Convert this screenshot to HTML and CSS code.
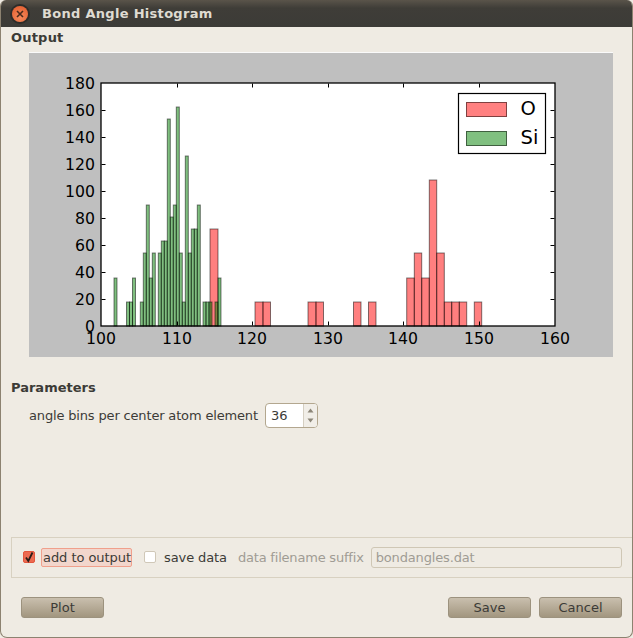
FILE: index.html
```html
<!DOCTYPE html>
<html>
<head>
  <meta charset="UTF-8">
  <title>Bond Angle Histogram</title>
  <link rel="stylesheet" href="styles.css">
</head>
<body>
  <div class="window">
    <div class="titlebar">
      <span class="close-btn"><svg width="8" height="8" viewBox="0 0 8 8"><path d="M1 1L7 7M7 1L1 7" stroke="#4a2a1c" stroke-width="1.6"/></svg></span>
      <span class="title">Bond Angle Histogram</span>
    </div>

    <div class="content">
      <div class="section-label output-label">Output</div>
      <div class="plot">
        <svg width="584" height="304" viewBox="29 53 584 304">
          <rect class="axes-bg" x="101" y="83" width="454" height="243"/>
          <g class="bar-o">
            <rect x="210" y="229" width="8" height="97"/>
            <rect x="255" y="302" width="8" height="24"/>
            <rect x="263" y="302" width="7.5" height="24"/>
            <rect x="308" y="302" width="8" height="24"/>
            <rect x="316" y="302" width="7.5" height="24"/>
            <rect x="353.500" y="302" width="7.500" height="24"/>
            <rect x="368.500" y="302" width="7.500" height="24"/>
            <rect x="406.700" y="278" width="7.600" height="48"/>
            <rect x="414.300" y="253" width="7.400" height="73"/>
            <rect x="421.700" y="278" width="7.600" height="48"/>
            <rect x="429.300" y="180" width="7.400" height="146"/>
            <rect x="436.700" y="253" width="7.600" height="73"/>
            <rect x="444.300" y="302" width="7.400" height="24"/>
            <rect x="451.700" y="302" width="7.600" height="24"/>
            <rect x="459.300" y="302" width="7.400" height="24"/>
            <rect x="474.300" y="302" width="7.400" height="24"/>
          </g>
          <g class="bar-si">
            <rect x="114" y="278" width="3" height="48"/>
            <rect x="126.500" y="302" width="3" height="24"/>
            <rect x="129.500" y="302" width="3" height="24"/>
            <rect x="132.500" y="278" width="3" height="48"/>
            <rect x="140.300" y="302" width="3" height="24"/>
            <rect x="143.300" y="253" width="3" height="73"/>
            <rect x="146.300" y="205" width="3" height="121"/>
            <rect x="149.300" y="278" width="3" height="48"/>
            <rect x="152.300" y="253" width="3" height="73"/>
            <rect x="158.300" y="253" width="3" height="73"/>
            <rect x="161.300" y="241" width="3" height="85"/>
            <rect x="164.300" y="241" width="3" height="85"/>
            <rect x="167.300" y="119" width="3" height="207"/>
            <rect x="170.300" y="217" width="3" height="109"/>
            <rect x="173.300" y="205" width="3" height="121"/>
            <rect x="176.300" y="107" width="3" height="219"/>
            <rect x="179.300" y="253" width="3" height="73"/>
            <rect x="182.300" y="302" width="3" height="24"/>
            <rect x="185.300" y="156" width="3" height="170"/>
            <rect x="188.300" y="253" width="3" height="73"/>
            <rect x="191.300" y="229" width="3" height="97"/>
            <rect x="194.300" y="229" width="3" height="97"/>
            <rect x="197.300" y="205" width="3" height="121"/>
            <rect x="203" y="302" width="3" height="24"/>
            <rect x="206" y="302" width="3" height="24"/>
            <rect x="209" y="302" width="3" height="24"/>
            <rect x="215" y="302" width="3" height="24"/>
            <rect x="218" y="278" width="3" height="48"/>
          </g>
          <path class="ticks" d="M101.500 299.500h4M101.500 272.500h4M101.500 245.500h4M101.500 218.500h4M101.500 191.500h4M101.500 164.500h4M101.500 137.500h4M101.500 110.500h4
            M554.500 299.500h-4M554.500 272.500h-4M554.500 245.500h-4M554.500 218.500h-4M554.500 191.500h-4M554.500 164.500h-4M554.500 137.500h-4M554.500 110.500h-4
            M177.500 325.500v-4M252.500 325.500v-4M328.500 325.500v-4M403.500 325.500v-4M479.500 325.500v-4
            M177.500 83.500v4M252.500 83.500v4M328.500 83.500v4M403.500 83.500v4M479.500 83.500v4"/>
          <rect class="axes-frame" x="101" y="83" width="454" height="243"/>
          <g class="tick-label y-labels">
            <text x="95" y="332">0</text>
            <text x="95" y="305">20</text>
            <text x="95" y="278">40</text>
            <text x="95" y="251">60</text>
            <text x="95" y="224">80</text>
            <text x="95" y="197">100</text>
            <text x="95" y="170">120</text>
            <text x="95" y="143">140</text>
            <text x="95" y="116">160</text>
            <text x="95" y="89">180</text>
          </g>
          <g class="tick-label x-labels">
            <text x="101" y="344">100</text>
            <text x="177" y="344">110</text>
            <text x="252" y="344">120</text>
            <text x="328" y="344">130</text>
            <text x="403" y="344">140</text>
            <text x="479" y="344">150</text>
            <text x="555" y="344">160</text>
          </g>
          <rect class="legend-box" x="458.500" y="93.500" width="87" height="60"/>
          <rect class="legend-o" x="466.500" y="102.500" width="40" height="14"/>
          <rect class="legend-si" x="466.500" y="131.500" width="40" height="14"/>
          <text class="legend-text" x="520.500" y="115">O</text>
          <text class="legend-text" x="520.500" y="144">Si</text>
        </svg>
      </div>

      <div class="section-label params-label">Parameters</div>
      <div class="param-row">
        <span class="param-text">angle bins per center atom element</span>
        <div class="spin">
          <span class="spin-value">36</span>
          <span class="spin-arrows">
            <svg width="7" height="5" viewBox="0 0 7 5"><path d="M3.500 0.500L6.500 4.500H0.500Z"/></svg>
            <svg width="7" height="5" viewBox="0 0 7 5"><path d="M0.500 0.500H6.500L3.500 4.500Z"/></svg>
          </span>
        </div>
      </div>

      <div class="spacer"></div>

      <div class="output-group">
        <span class="check checked"><svg width="12" height="12" viewBox="0 0 12 12"><path d="M3 6.500L5.300 10L9.500 1.500" fill="none" stroke="#2a1d18" stroke-width="1.800"/></svg></span>
        <span class="check-label highlighted">add to output</span>
        <span class="check"></span>
        <span class="save-label">save data</span>
        <span class="suffix-label">data filename suffix</span>
        <div class="suffix-input">bondangles.dat</div>
      </div>

      <div class="button-row">
        <button class="btn">Plot</button>
        <div class="button-gap"></div>
        <button class="btn">Save</button>
        <button class="btn">Cancel</button>
      </div>
    </div>
  </div>
</body>
</html>
```
FILE: styles.css
```css
* { box-sizing: border-box; }
html, body {
  margin: 0; padding: 0;
  background: #efebe3;
  overflow: hidden;
  height: 100%;
}
body { font-family: 'DejaVu Sans', sans-serif; font-size: 13px; color: #3c3b37; }

.window {
  width: 633px; height: 638px;
  display: flex; flex-direction: column;
  background: #efebe3;
  border: 1px solid #8c8270;
  border-top: none;
  border-radius: 6px 6px 7px 7px;
  overflow: hidden;
}

.titlebar {
  height: 27px; flex: none;
  margin: 0 -1px;
  display: flex; align-items: center;
  padding-left: 12px;
  background: linear-gradient(#5a544a, #3f3d38 30%, #3c3b37);
  color: #dfdbd2;
  font-weight: bold;
  letter-spacing: 0.3px;
}
.close-btn {
  width: 16px; height: 16px;
  border-radius: 50%;
  display: flex; align-items: center; justify-content: center;
  background: radial-gradient(circle at 50% 70%, #f58a5c, #e2592a);
  box-shadow: 0 0 0 2px #2d2c29;
}
.title { margin-left: 14px; }

.content { flex: 1; display: flex; flex-direction: column; min-height: 0; }

.section-label { font-weight: bold; margin-left: 10px; line-height: 16px; }
.output-label { margin-top: 3px; letter-spacing: 0.2px; }
.params-label { margin-top: 23px; }

.plot {
  margin: 6px 0 0 28px;
  width: 584px; height: 305px;
  background: #bfbfbf;
  border-top: 1px solid #fafafa;
}
.plot svg { display: block; }
.axes-bg { fill: #fff; }
.axes-frame { fill: none; stroke: #000; stroke-width: 1.300; }
.ticks { fill: none; stroke: #000; stroke-width: 1; }
.bar-o rect { fill: rgba(255,0,0,0.5); stroke: rgba(0,0,0,0.5); stroke-width: 1; }
.bar-si rect { fill: rgba(0,128,0,0.5); stroke: rgba(0,0,0,0.5); stroke-width: 1; }
.tick-label text { font-size: 15.700px; fill: #000; font-family: 'DejaVu Sans', sans-serif; }
.y-labels text { text-anchor: end; }
.x-labels text { text-anchor: middle; }
.legend-box { fill: #fff; stroke: #000; stroke-width: 1.200; }
.legend-o { fill: #ff8080; stroke: #7f4040; stroke-width: 1; }
.legend-si { fill: #80c080; stroke: #406040; stroke-width: 1; }
.legend-text { font-size: 19.500px; fill: #000; font-family: 'DejaVu Sans', sans-serif; }

.param-row {
  display: flex; align-items: center; gap: 7px;
  margin: 7px 0 0 28px;
  height: 25px;
}
.param-text { letter-spacing: -0.16px; }
.spin {
  width: 53px; height: 25px;
  display: flex;
  background: #fff;
  border: 1px solid #b3a78f;
  border-radius: 4px;
  overflow: hidden;
}
.spin-value { flex: 1; padding-left: 5px; line-height: 23px; }
.spin-arrows {
  width: 14px;
  display: flex; flex-direction: column; align-items: center; justify-content: space-between;
  padding: 4px 0;
  background: #f1eee8;
  border-left: 1px solid #d5cfc2;
}
.spin-arrows svg { display: block; }
.spin-arrows path { fill: #8c8678; }

.spacer { flex: 1; }

.output-group {
  height: 41px;
  margin: 0 0 0 10px;
  display: flex; align-items: center;
  padding: 0 0 1px 11px;
  border: 1px solid #d8d1c1;
  border-right: none;
}
.check {
  width: 12px; height: 12px; flex: none;
  background: #fff;
  border: 1px solid #d0c8b8;
  border-radius: 2px;
  display: block;
}
.check svg { display: block; margin: -1px; }
.check.checked { background: #ec6a50; border-color: #e2553c; }
.check-label { margin: 0 12px 0 6px; }
.highlighted {
  width: 91px; height: 19px; line-height: 17px;
  padding: 0 0 0 1px;
  white-space: nowrap;
  letter-spacing: -0.05px;
  background: #f2d6cc;
  border: 1px solid #f0a08c;
  border-radius: 2px;
}
.save-label { margin-left: 8px; letter-spacing: -0.1px; }
.suffix-label { margin-left: 11px; color: #a09c94; letter-spacing: -0.2px; }
.suffix-input {
  width: 251px; height: 21px;
  margin-left: 7px;
  padding-left: 4px;
  line-height: 19px;
  color: #a09c94;
  letter-spacing: -0.15px;
  border: 1px solid #cfc7b5;
  border-radius: 3px;
}

.button-row {
  display: flex; gap: 8px;
  margin: 19px 10px 19px 20px;
}
.button-gap { flex: 1; }
.btn {
  width: 83px; height: 21px;
  padding: 0;
  font: 13px 'DejaVu Sans', sans-serif;
  color: #3c3b37;
  background: linear-gradient(#c9bfae, #a2967f);
  border: 1px solid #9c927e;
  border-radius: 3px;
}
```
